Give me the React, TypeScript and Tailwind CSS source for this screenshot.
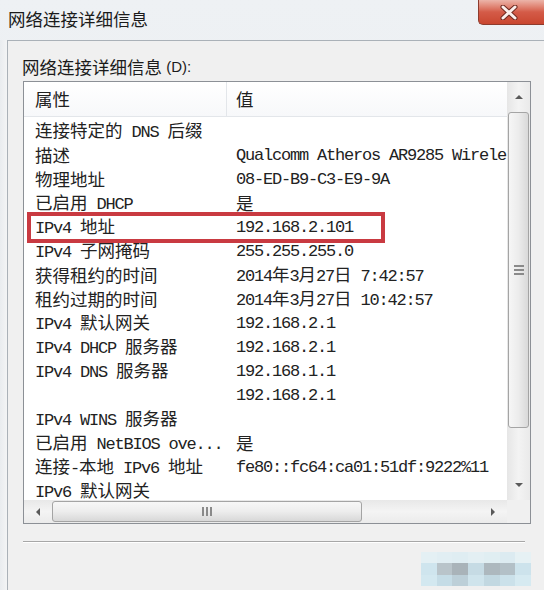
const CJK = "font-['Noto_Sans_CJK_SC',sans-serif] text-[17.5px]";
const LAT = "font-['Liberation_Mono',monospace] text-[17px] tracking-[-1.2px]";

function Txt({ s }: { s: string }) {
  const parts = s.split(/([\x00-\x7f]+)/).filter(Boolean);
  return (
    <>
      {parts.map((p, i) =>
        /^[\x00-\x7f]+$/.test(p) ? (
          <span key={i} className={LAT}>{p}</span>
        ) : (
          <span key={i} className={CJK}>{p}</span>
        )
      )}
    </>
  );
}

const rows: [string, string][] = [
  ['连接特定的 DNS 后缀', ''],
  ['描述', 'Qualcomm Atheros AR9285 Wireless Network Adapter'],
  ['物理地址', '08-ED-B9-C3-E9-9A'],
  ['已启用 DHCP', '是'],
  ['IPv4 地址', '192.168.2.101'],
  ['IPv4 子网掩码', '255.255.255.0'],
  ['获得租约的时间', '2014年3月27日 7:42:57'],
  ['租约过期的时间', '2014年3月27日 10:42:57'],
  ['IPv4 默认网关', '192.168.2.1'],
  ['IPv4 DHCP 服务器', '192.168.2.1'],
  ['IPv4 DNS 服务器', '192.168.1.1'],
  ['', '192.168.2.1'],
  ['IPv4 WINS 服务器', ''],
  ['已启用 NetBIOS ove...', '是'],
  ['连接-本地 IPv6 地址', 'fe80::fc64:ca01:51df:9222%11'],
  ['IPv6 默认网关', ''],
];

const Arrow = ({ dir }: { dir: 'up' | 'down' | 'left' | 'right' }) => {
  const pts = {
    up: '0,5 4,1 8,5',
    down: '0,1 8,1 4,5',
    left: '5,0 5,8 1,4',
    right: '1,0 1,8 5,4',
  }[dir];
  const vert = dir === 'up' || dir === 'down';
  return (
    <svg width={vert ? 8 : 6} height={vert ? 6 : 8} viewBox={vert ? '0 0 8 6' : '0 0 6 8'}>
      <polygon points={pts} fill="#5a5a5a" />
    </svg>
  );
};

const wm = [
  '#e4f0f4', '#e1eef3', '#dfedf2', '#e3eff3', '#e0eef2', '#dcebf1', '#e6f1f4',
  '#cfe5ee', '#b9c4ca', '#a9b3b9', '#c6dbe4', '#adb8be', '#b3c0c7', '#cde3ec',
  '#d3e8f0', '#c5dce6', '#bccfd8', '#cfe4ec', '#c2d8e1', '#cbe1ea', '#d6eaf1',
];

export default function App() {
  return (
    <div className="w-[544px] h-[590px] overflow-hidden flex flex-col bg-gradient-to-b from-[#eef1f4] to-[#e6eaee] text-[#202020]">
      {/* title bar */}
      <div className="h-[40px] flex justify-between items-start shrink-0">
        <div className="pl-[8px] pt-[8px] leading-[22px] whitespace-pre text-[#1b1b1b]">
          <Txt s="网络连接详细信息" />
        </div>
        <div className="w-[66px] h-[25px] rounded-bl-[5px] border-l border-b border-[#8d3b2d] bg-gradient-to-b from-[#ebb4a9] via-[#d45b48] to-[#c9462f] flex items-center justify-center pr-[6px]">
          <svg width="18" height="15" viewBox="0 0 18 15">
            <path d="M3 2 L15 13 M15 2 L3 13" stroke="#6e2a20" strokeWidth="5" strokeLinecap="round" />
            <path d="M3 2 L15 13 M15 2 L3 13" stroke="#fbefec" strokeWidth="3" strokeLinecap="round" />
          </svg>
        </div>
      </div>

      <div className="flex flex-1 min-h-0">
        <div className="w-[7px] bg-gradient-to-r from-[#e9ecef] to-[#f3f4f5]" />
        <div className="flex-1 border-l border-t border-[#aab1b8] bg-[#f0f0f0] pt-[14px] pl-[15px] pr-[13px] flex flex-col">
          <div className="h-[24px] flex items-center whitespace-pre -ml-[1px] text-[#1b1b1b]">
            <Txt s="网络连接详细信息" />
            <span className="font-['Liberation_Sans',sans-serif] text-[15px]"> (D):</span>
          </div>

          {/* list box */}
          <div className="mt-[2px] w-[508px] h-[443px] border border-[#8c9096] bg-white flex flex-col relative">
            <div className="flex flex-1 min-h-0">
              <div className="flex-1 min-w-0 overflow-hidden flex flex-col">
                <div className="h-[35px] shrink-0 flex border-b border-[#e3e6ea] bg-gradient-to-b from-white to-[#f7f8fa]">
                  <div className="w-[203px] pl-[11px] flex items-center border-r border-[#e3e6ea] whitespace-pre">
                    <Txt s="属性" />
                  </div>
                  <div className="pl-[9px] flex items-center whitespace-pre">
                    <Txt s="值" />
                  </div>
                </div>
                <div className="pt-[2px] flex flex-col">
                  {rows.map(([k, v], i) => (
                    <div key={i} className="h-[24px] shrink-0 flex items-center whitespace-pre text-[#222]">
                      <div className="w-[201px] shrink-0 pl-[11px]">
                        <Txt s={k} />
                      </div>
                      <div className="pl-[11px]">
                        <Txt s={v} />
                      </div>
                    </div>
                  ))}
                </div>
              </div>
              {/* vertical scrollbar */}
              <div className="w-[23px] shrink-0 flex flex-col bg-gradient-to-r from-[#e6e6e6] via-[#f3f3f3] to-[#eaeaea]">
                <div className="h-[30px] flex items-center justify-center">
                  <Arrow dir="up" />
                </div>
                <div className="h-[316px] mx-[1px] rounded-[3px] border border-[#a4a4a4] bg-gradient-to-r from-[#f6f6f6] via-[#ececec] to-[#d9d9d9] flex flex-col items-center justify-center gap-[2px]">
                  <div className="w-[10px] h-[2px] bg-[#8a8a8a]" />
                  <div className="w-[10px] h-[2px] bg-[#8a8a8a]" />
                  <div className="w-[10px] h-[2px] bg-[#8a8a8a]" />
                </div>
                <div className="flex-1" />
                <div className="h-[30px] flex items-center justify-center">
                  <Arrow dir="down" />
                </div>
              </div>
            </div>
            {/* horizontal scrollbar */}
            <div className="h-[23px] shrink-0 flex">
              <div className="flex-1 flex bg-gradient-to-b from-[#e8e8e8] via-[#f4f4f4] to-[#ebebeb]">
                <div className="w-[28px] flex items-center justify-center">
                  <Arrow dir="left" />
                </div>
                <div className="w-[310px] my-[1px] rounded-[3px] border border-[#a4a4a4] bg-gradient-to-b from-[#f7f7f7] via-[#ededed] to-[#d8d8d8] flex items-center justify-center gap-[2px]">
                  <div className="w-[2px] h-[9px] bg-[#8a8a8a]" />
                  <div className="w-[2px] h-[9px] bg-[#8a8a8a]" />
                  <div className="w-[2px] h-[9px] bg-[#8a8a8a]" />
                </div>
                <div className="flex-1" />
                <div className="w-[28px] flex items-center justify-center">
                  <Arrow dir="right" />
                </div>
              </div>
              <div className="w-[23px] bg-[#f0f0f0]" />
            </div>

            {/* highlight */}
            <div className="absolute left-[3px] top-[130px] w-[358px] h-[31px] border-[4px] border-[#c93a41]" />
          </div>

          <div className="mt-[17px] w-[502px] border-t border-[#a7a7a7] border-b border-b-white" />

          <div className="mt-[9px] self-end grid grid-cols-7 w-[110px] h-[34px]">
            {wm.map((c, i) => (
              <div key={i} style={{ backgroundColor: c }} />
            ))}
          </div>
        </div>
      </div>
    </div>
  );
}
